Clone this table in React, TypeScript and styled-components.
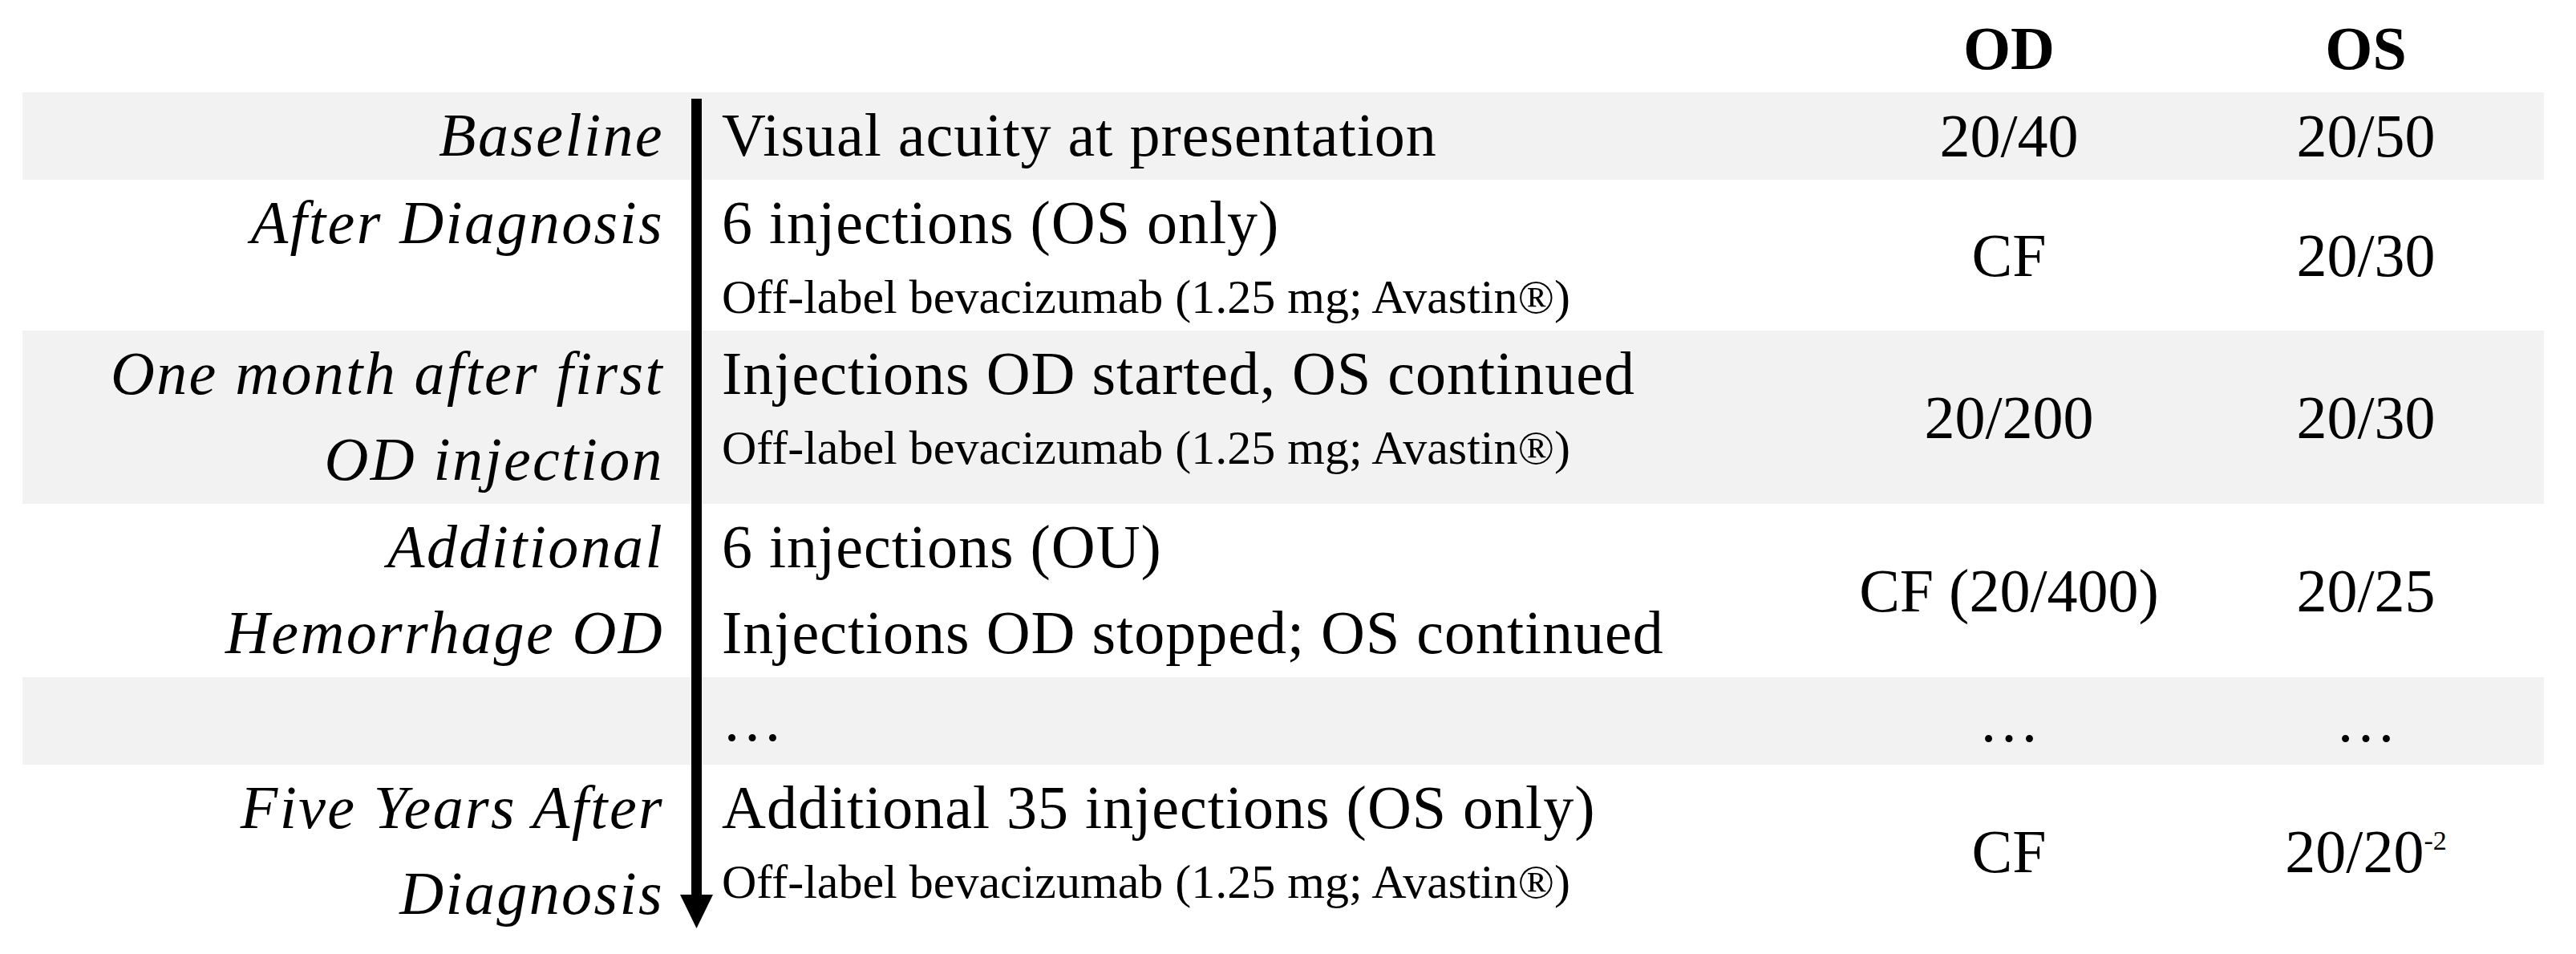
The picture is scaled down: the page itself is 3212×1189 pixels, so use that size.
import React from "react";
import styled, { createGlobalStyle } from "styled-components";

const Global = createGlobalStyle`
  html, body { margin: 0; padding: 0; background: #ffffff; }
  body {
    font-family: "Liberation Serif", "Times New Roman", serif;
    color: #000000;
  }
`;

const Page = styled.div`
  width: 3212px;
  height: 1189px;
  box-sizing: border-box;
  padding: 0 40px 0 28px;
  overflow: hidden;
`;

const Table = styled.div`
  display: flex;
  flex-direction: column;
  width: 3144px;
`;

const COLS = "820px 41px 1393px 446px 444px";

const Row = styled.div<{ $shade?: boolean }>`
  display: grid;
  grid-template-columns: ${COLS};
  background: ${(p) => (p.$shade ? "#f2f2f2" : "transparent")};
`;

const HeaderRow = styled.div`
  display: grid;
  grid-template-columns: ${COLS};
  padding: 7px 0 1px;
`;

const HeaderCell = styled.div`
  font-weight: 700;
  font-size: 76px;
  line-height: 107px;
  text-align: center;
`;

const Spacer = styled.div``;

const LabelCell = styled.div`
  display: flex;
  flex-direction: column;
  align-items: flex-end;
  padding: 0 20px 2px 0;
  font-style: italic;
  font-size: 76px;
  line-height: 107px;
  letter-spacing: 2.4px;
  white-space: nowrap;
`;

const LabelLine = styled.span`
  display: block;
`;

const AxisCell = styled.div<{ $first?: boolean; $last?: boolean }>`
  display: flex;
  flex-direction: column;
  align-items: center;
  padding-top: ${(p) => (p.$first ? "8px" : "0")};
  padding-bottom: ${(p) => (p.$last ? "12px" : "0")};
`;

const Shaft = styled.div`
  width: 13px;
  flex: 1;
  background: #000000;
`;

const ArrowHead = styled.svg`
  display: block;
  flex: none;
`;

const DescCell = styled.div`
  display: flex;
  flex-direction: column;
  padding: 0 0 2px 11px;
  white-space: nowrap;
`;

const MainLine = styled.span`
  display: block;
  font-size: 76px;
  line-height: 107px;
  letter-spacing: 1px;
`;

const SubLine = styled.span`
  display: block;
  font-size: 60px;
  line-height: 79px;
`;

const ValueCell = styled.div`
  display: flex;
  align-items: center;
  justify-content: center;
  font-size: 76px;
  line-height: 107px;
  white-space: nowrap;
`;

const ValueText = styled.span`
  display: inline-block;
`;

const Sup = styled.sup`
  font-size: 34px;
  line-height: 0;
  vertical-align: 28px;
`;

type Entry = {
  label: string[];
  desc: { text: string; sub?: boolean }[];
  od: React.ReactNode;
  os: React.ReactNode;
  shade: boolean;
};

const SUB = "Off-label bevacizumab (1.25 mg; Avastin®)";

const rows: Entry[] = [
  {
    label: ["Baseline"],
    desc: [{ text: "Visual acuity at presentation" }],
    od: "20/40",
    os: "20/50",
    shade: true,
  },
  {
    label: ["After Diagnosis"],
    desc: [{ text: "6 injections (OS only)" }, { text: SUB, sub: true }],
    od: "CF",
    os: "20/30",
    shade: false,
  },
  {
    label: ["One month after first", "OD injection"],
    desc: [{ text: "Injections OD started, OS continued" }, { text: SUB, sub: true }],
    od: "20/200",
    os: "20/30",
    shade: true,
  },
  {
    label: ["Additional", "Hemorrhage OD"],
    desc: [{ text: "6 injections (OU)" }, { text: "Injections OD stopped; OS continued" }],
    od: "CF (20/400)",
    os: "20/25",
    shade: false,
  },
  {
    label: [""],
    desc: [{ text: "…" }],
    od: "…",
    os: "…",
    shade: true,
  },
  {
    label: ["Five Years After", "Diagnosis"],
    desc: [{ text: "Additional 35 injections (OS only)" }, { text: SUB, sub: true }],
    od: "CF",
    os: (
      <>
        20/20<Sup>-2</Sup>
      </>
    ),
    shade: false,
  },
];

export default function App() {
  return (
    <Page>
      <Global />
      <Table>
        <HeaderRow>
          <Spacer />
          <Spacer />
          <Spacer />
          <HeaderCell>OD</HeaderCell>
          <HeaderCell>OS</HeaderCell>
        </HeaderRow>
        {rows.map((r, i) => {
          const first = i === 0;
          const last = i === rows.length - 1;
          return (
            <Row key={i} $shade={r.shade}>
              <LabelCell>
                {r.label.map((l, j) => (
                  <LabelLine key={j}>{l || "\u00a0"}</LabelLine>
                ))}
              </LabelCell>
              <AxisCell $first={first} $last={last}>
                <Shaft />
                {last && (
                  <ArrowHead width="41" height="42" viewBox="0 0 41 42">
                    <polygon points="0,0 41,0 20.5,42" fill="#000" />
                  </ArrowHead>
                )}
              </AxisCell>
              <DescCell>
                {r.desc.map((d, j) =>
                  d.sub ? (
                    <SubLine key={j}>{d.text}</SubLine>
                  ) : (
                    <MainLine key={j}>{d.text}</MainLine>
                  )
                )}
              </DescCell>
              <ValueCell>
                <ValueText>{r.od}</ValueText>
              </ValueCell>
              <ValueCell>
                <ValueText>{r.os}</ValueText>
              </ValueCell>
            </Row>
          );
        })}
      </Table>
    </Page>
  );
}
